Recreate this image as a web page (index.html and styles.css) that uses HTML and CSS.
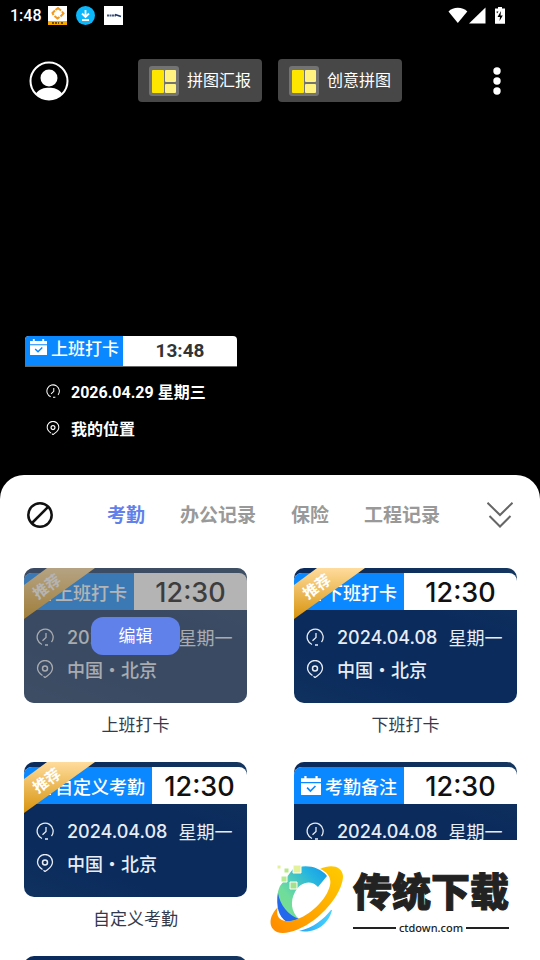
FILE: index.html
```html
<!DOCTYPE html>
<html lang="zh-CN">
<head>
    <meta charset="UTF-8">
    <meta name="viewport" content="width=device-width, initial-scale=1">
    <title>水印相机</title>
    <link rel="stylesheet" href="styles.css">
</head>
<body>
<svg class="defs" width="0" height="0" aria-hidden="true">
    <defs>
        <symbol id="clock" viewBox="0 0 18 18">
            <path d="M6 16.500A8 8 0 1 1 15.500 14M9 17h3M10 5v4.500L6.500 12.800" fill="none" stroke="currentColor" stroke-width="1.3"/>
        </symbol>
        <symbol id="pin" viewBox="0 0 18 18">
            <path d="M6.500 15.500C3.500 13.500 1.500 11 1.500 8a7.500 7.500 0 0 1 15 0c0 3-2 5.500-5 7.700L9 17.500 7.500 16.300" fill="none" stroke="currentColor" stroke-width="1.3"/>
            <circle cx="9" cy="8.500" r="2.500" fill="none" stroke="currentColor" stroke-width="1.500"/>
        </symbol>
        <symbol id="calendar" viewBox="0 0 18 18">
            <path d="M0 2h3V0h2v2h8V0h2v2h3v3.500H0z" fill="#fff"/>
            <path d="M0 6.500h18V17H0z" fill="#fff"/>
            <path d="M5.500 10.500l3 3 4.500-4.500" fill="none" stroke="#0a88ff" stroke-width="1.500"/>
        </symbol>
        <symbol id="collage" viewBox="0 0 30 30">
            <rect width="30" height="30" rx="3" fill="#737373"/>
            <rect x="3" y="4" width="12" height="23" rx="1" fill="#ffe600"/>
            <rect x="16" y="4" width="11" height="12" rx="1" fill="#fff280"/>
            <rect x="16" y="18" width="11" height="9" rx="1" fill="#fff280"/>
        </symbol>
    </defs>
</svg>

<div class="camera">
    <div class="status">
        <span class="status-time">1:48</span>
        <svg width="19" height="19" viewBox="0 0 19 19">
            <path d="M0 0h19v19H0z" fill="#fff"/>
            <path d="M0 15h19v4H0z" fill="#f9a800"/>
            <path d="M7.500 4L10 2l3 2.500M14 5.500l1.500 2-3 3M11.500 11L9.500 12.500 6.500 10M5.500 9L4.500 7l2.500-2.500" fill="none" stroke="#f39a1d" stroke-width="2"/>
            <path d="M4 17h7M13 17h3" stroke="#4a3200" stroke-width="1.500" stroke-dasharray="2 1"/>
        </svg>
        <svg width="19" height="19" viewBox="0 0 19 19">
            <circle cx="9.500" cy="9.500" r="9.500" fill="#0bb8fb"/>
            <path d="M9.500 4v7M6 7.500l3.500 3.500L13 7.500M6 14h7" fill="none" stroke="#fff" stroke-width="1.800"/>
        </svg>
        <svg width="19" height="19" viewBox="0 0 19 19">
            <path d="M0 0h19v19H0z" fill="#fff"/>
            <path d="M3 9.500h9" stroke="#44567f" stroke-width="2" stroke-dasharray="2 .5"/>
            <path d="M11 8.500l6 2" stroke="#1b3568" stroke-width="1.500"/>
        </svg>
        <div class="status-right">
            <svg width="20" height="17" viewBox="0 0 20 17"><path d="M.5 4.500C3 2 6 .8 9.800.8s7 1.200 9.500 3.700L9.800 16z" fill="#fff"/></svg>
            <svg width="17" height="17" viewBox="0 0 17 17"><path d="M0 16.500L16.500.5v16z" fill="#fff"/></svg>
            <svg class="battery" width="10" height="17" viewBox="0 0 10 17">
                <path d="M0 1.500h3V0h4v1.500h3v15.300H0z" fill="#fff"/>
                <path d="M6 4L2.500 10H5l-.5 4L7.800 8.500H5.500zM1.500 4.500h2l-1.500 2z" fill="#000"/>
            </svg>
        </div>
    </div>

    <div class="toolbar">
        <button type="button" class="icon-btn" aria-label="我的">
            <svg width="40" height="40" viewBox="0 0 40 40">
                <circle cx="20" cy="20" r="18.500" fill="none" stroke="#fff" stroke-width="2"/>
                <circle cx="20" cy="17" r="8.500" fill="#fff"/>
                <path d="M7 32.500C10 28 15 26.800 20 26.800s10 1.200 13 5.700c-3.500 4-8 6-13 6s-9.500-2-13-6z" fill="#fff"/>
            </svg>
        </button>
        <div class="collages">
            <button type="button" class="collage-btn"><svg width="30" height="30"><use href="#collage"/></svg>拼图汇报</button>
            <button type="button" class="collage-btn"><svg width="30" height="30"><use href="#collage"/></svg>创意拼图</button>
        </div>
        <button type="button" class="icon-btn more" aria-label="更多">
            <svg width="8" height="28" viewBox="0 0 8 28" fill="#fff">
                <circle cx="4" cy="4" r="3.700"/><circle cx="4" cy="14" r="3.700"/><circle cx="4" cy="24" r="3.700"/>
            </svg>
        </button>
    </div>

    <div class="mark">
        <div class="mark-head">
            <div class="mark-title"><svg width="17" height="17"><use href="#calendar"/></svg>上班打卡</div>
            <div class="mark-time">13:48</div>
        </div>
        <div class="mark-row"><svg width="14" height="14"><use href="#clock"/></svg>2026.04.29 星期三</div>
        <div class="mark-row"><svg width="14" height="14"><use href="#pin"/></svg>我的位置</div>
    </div>
</div>

<div class="sheet">
    <div class="tabs">
        <button type="button" class="icon-btn" aria-label="无水印">
            <svg width="26" height="26" viewBox="0 0 26 26" fill="none" stroke="#111" stroke-width="2.500">
                <circle cx="13" cy="13" r="11.700"/><path d="M5 21L21 5"/>
            </svg>
        </button>
        <div class="tab-list">
            <button type="button" class="tab active">考勤</button>
            <button type="button" class="tab">办公记录</button>
            <button type="button" class="tab">保险</button>
            <button type="button" class="tab">工程记录</button>
        </div>
        <button type="button" class="icon-btn" aria-label="收起">
            <svg width="26" height="26" viewBox="0 0 26 26" fill="none" stroke="#666" stroke-width="2">
                <path d="M.5.800L13 13 25.500.800M2.500 14L13 24.500 23.500 14"/>
            </svg>
        </button>
    </div>

    <div class="grid">
        <div class="item">
            <div class="card">
                <div class="card-head">
                    <div class="card-title"><svg width="20" height="20"><use href="#calendar"/></svg>上班打卡</div>
                    <div class="card-time">12:30</div>
                </div>
                <div class="card-row"><svg width="18" height="18"><use href="#clock"/></svg>2024.04.08<span class="week">星期一</span></div>
                <div class="card-row"><svg width="18" height="18"><use href="#pin"/></svg>中国・北京</div>
                <div class="ribbon"><span>推荐</span></div>
                <div class="cover"><button type="button" class="edit">编辑</button></div>
            </div>
            <div class="name">上班打卡</div>
        </div>
        <div class="item">
            <div class="card">
                <div class="card-head">
                    <div class="card-title"><svg width="20" height="20"><use href="#calendar"/></svg>下班打卡</div>
                    <div class="card-time">12:30</div>
                </div>
                <div class="card-row"><svg width="18" height="18"><use href="#clock"/></svg>2024.04.08<span class="week">星期一</span></div>
                <div class="card-row"><svg width="18" height="18"><use href="#pin"/></svg>中国・北京</div>
                <div class="ribbon"><span>推荐</span></div>
            </div>
            <div class="name">下班打卡</div>
        </div>
        <div class="item">
            <div class="card">
                <div class="card-head">
                    <div class="card-title"><svg width="20" height="20"><use href="#calendar"/></svg>自定义考勤</div>
                    <div class="card-time">12:30</div>
                </div>
                <div class="card-row"><svg width="18" height="18"><use href="#clock"/></svg>2024.04.08<span class="week">星期一</span></div>
                <div class="card-row"><svg width="18" height="18"><use href="#pin"/></svg>中国・北京</div>
                <div class="ribbon"><span>推荐</span></div>
            </div>
            <div class="name">自定义考勤</div>
        </div>
        <div class="item">
            <div class="card">
                <div class="card-head">
                    <div class="card-title"><svg width="20" height="20"><use href="#calendar"/></svg>考勤备注</div>
                    <div class="card-time">12:30</div>
                </div>
                <div class="card-row"><svg width="18" height="18"><use href="#clock"/></svg>2024.04.08<span class="week">星期一</span></div>
            </div>
        </div>
        <div class="item">
            <div class="card"></div>
        </div>
    </div>
</div>

<div class="site">
    <svg width="76" height="72" viewBox="0 0 76 72">
        <defs>
            <linearGradient id="g-c" x1="0" y1="1" x2="1" y2="0">
                <stop offset="0" stop-color="#7ee08a"/><stop offset=".35" stop-color="#6fdc9c"/><stop offset=".75" stop-color="#25b5e0"/><stop offset="1" stop-color="#1497ea"/>
            </linearGradient>
            <linearGradient id="g-o" x1="0" y1="1" x2="1" y2="0">
                <stop offset="0" stop-color="#ff8a00"/><stop offset="1" stop-color="#ffcc00"/>
            </linearGradient>
            <linearGradient id="g-b" x1="0" y1="0" x2="1" y2="0">
                <stop offset="0" stop-color="#2aa4f4"/><stop offset="1" stop-color="#49d3ff"/>
            </linearGradient>
        </defs>
        <path d="M24 5C35 0 50 2 58 12l-9 11C42 15 31 18 26 28c-5 9-4 20 4 27l-8 3C9 50 5 35 11 22z" fill="url(#g-c)"/>
        <path d="M9 29C7 41 9 53 18 58l12-3C19 51 11 41 9 29z" fill="#2468ee"/>
        <path d="M30 67c14-3 25-12 32-21h1c-3 13-15 24-33 21z" fill="url(#g-b)"/>
        <path d="M51 5c11-5 22-3 23 7 0 13-13 32-29 44C29 68 10 73 4 65-1 59 2 50 9 43c-3 9 2 15 12 14 13-1 32-16 38-30 5-10 2-18-8-22z" fill="url(#g-o)"/>
        <g stroke="#fff" stroke-width="1">
            <path d="M24 1h8v8h-8z" fill="#e3f29a"/>
            <path d="M15 4h5v5h-5z" fill="#b8e986"/>
            <path d="M8 1h4v4H8z" fill="#e3f29a"/>
            <path d="M12 12h6v6h-6z" fill="#b5ea90"/>
            <path d="M21 18h7v7h-7z" fill="#a2e28a"/>
        </g>
    </svg>
    <div class="site-text">
        <div class="site-name">传统下载</div>
        <div class="site-url">ctdown.com</div>
    </div>
</div>
</body>
</html>
```

FILE: styles.css
```css
* {
    box-sizing: border-box;
}
body {
    margin: 0;
    height: 100vh;
    display: flex;
    flex-direction: column;
    overflow: hidden;
    background: #000;
    font-family: Roboto, "Noto Sans CJK SC", sans-serif;
}
button {
    margin: 0;
    padding: 0;
    border: 0;
    background: none;
    font: inherit;
    color: inherit;
}
svg {
    display: block;
    flex-shrink: 0;
}
.defs {
    position: absolute;
}

/* camera */
.camera {
    flex: 1;
    min-height: 0;
    display: flex;
    flex-direction: column;
    color: #fff;
}
.status {
    display: flex;
    align-items: center;
    gap: 9px;
    height: 31px;
    padding: 0 35px 0 10px;
}
.status-time {
    font-size: 16px;
    font-weight: 500;
    width: 29px;
    white-space: nowrap;
}
.status-right {
    display: flex;
    gap: 1px;
    margin-left: auto;
    padding-bottom: 1px;
}
.battery {
    margin-left: 8px;
}
.toolbar {
    display: grid;
    grid-template-columns: 1fr auto 1fr;
    align-items: center;
    margin-top: 28px;
    padding: 0 29px;
}
.collages {
    display: flex;
    gap: 16px;
}
.collage-btn {
    display: flex;
    align-items: center;
    gap: 8px;
    height: 43px;
    padding: 0 11px;
    border-radius: 4px;
    background: #474747;
    font-size: 16px;
    line-height: 20px;
}
.icon-btn {
    justify-self: start;
}
.more {
    justify-self: end;
    margin-right: 10px;
}
.mark {
    width: 212px;
    margin: auto 0 29px 25px;
}
.mark-head {
    display: flex;
    height: 31px;
    margin-bottom: 5px;
    border-bottom: 1px solid #666;
    border-radius: 4px 4px 0 0;
    overflow: hidden;
    background: #fff;
}
.mark-title {
    display: flex;
    align-items: center;
    gap: 4px;
    padding: 0 4px 8px 5px;
    background: #0a88ff;
    font-size: 17px;
    font-weight: 500;
}
.mark-time {
    flex: 1;
    line-height: 30px;
    text-align: center;
    color: #333;
    font-size: 19px;
    font-weight: 700;
}
.mark-row {
    display: flex;
    align-items: center;
    gap: 11px;
    height: 37px;
    padding-left: 21px;
    font-size: 16px;
    font-weight: 700;
}

/* template sheet */
.sheet {
    height: 50.52vh;
    border-radius: 24px 24px 0 0;
    overflow: hidden;
    background: #fff;
}
.tabs {
    display: flex;
    align-items: center;
    justify-content: space-between;
    height: 80px;
    padding: 0 27px;
}
.tab-list {
    display: flex;
    gap: 35px;
    padding: 0 0 4px 7px;
}
.tab {
    color: #999;
    font-size: 19px;
    font-weight: 700;
}
.tab.active {
    color: #6080ea;
}
.grid {
    display: grid;
    grid-template-columns: 1fr 1fr;
    column-gap: 47px;
    padding: 13px 23px 0 24px;
}
.item {
    height: 194px;
}
.card {
    position: relative;
    height: 135px;
    padding-top: 5px;
    border-radius: 10px;
    overflow: hidden;
    background: linear-gradient(200deg, #14365f 0%, #0a2b5c 35%, #0a2b5c 75%, #10325f 100%);
    color: #e8edf5;
    font-family: Inter, "Noto Sans CJK SC", sans-serif;
    font-size: 18px;
}
.card-head {
    display: flex;
    height: 37px;
    margin-bottom: 11px;
    border-radius: 8px 8px 0 0;
    overflow: hidden;
    background: #fff;
}
.card-title {
    display: flex;
    align-items: center;
    gap: 4px;
    padding: 0 7px;
    background: #0a88ff;
    color: #fff;
    font-weight: 500;
    white-space: nowrap;
}
.card-time {
    flex: 1;
    line-height: 40px;
    text-align: center;
    color: #111;
    font-size: 27px;
    font-weight: 500;
}
.card-row {
    display: flex;
    align-items: center;
    gap: 13px;
    height: 32px;
    padding-left: 12px;
    font-weight: 500;
    white-space: nowrap;
}
.week {
    font-weight: 400;
    margin-left: -2px;
}
.ribbon {
    position: absolute;
    top: 0;
    left: 0;
    width: 71px;
    height: 51px;
    clip-path: polygon(23px 0, 100% 0, 0 100%, 0 17px);
    background: linear-gradient(to bottom, #ffdc9c, #d8930c);
    color: #fff;
    font-size: 15px;
    font-weight: 700;
}
.ribbon span {
    position: absolute;
    top: 8px;
    left: 8px;
    line-height: 22px;
    transform: rotate(-36deg);
}
.cover {
    position: absolute;
    inset: 0;
    display: flex;
    align-items: center;
    justify-content: center;
    background: rgba(106, 106, 106, .5);
}
.edit {
    width: 89px;
    height: 38px;
    padding-bottom: 2px;
    border-radius: 12px;
    background: #6080ea;
    color: #fff;
    font-size: 17px;
}
.name {
    line-height: 44px;
    text-align: center;
    color: #333a4d;
    font-size: 17px;
}

/* site banner */
.site {
    position: fixed;
    right: 0;
    bottom: 0;
    display: flex;
    align-items: center;
    gap: 8px;
    height: 120px;
    padding: 0 31px 0 0;
    background: #fff;
    color: #222;
}
.site-name {
    font-family: "Noto Sans CJK SC", sans-serif;
    font-size: 39px;
    font-weight: 900;
    line-height: 52px;
    -webkit-text-stroke: 1px #222;
}
.site-url {
    display: flex;
    align-items: center;
    gap: 3px;
    margin-top: 3px;
    font-family: "Noto Sans", sans-serif;
    font-size: 11px;
    font-weight: 500;
    line-height: 20px;
}
.site-url::before,
.site-url::after {
    content: "";
    flex: 1;
    height: 2px;
    background: #222;
}
```
